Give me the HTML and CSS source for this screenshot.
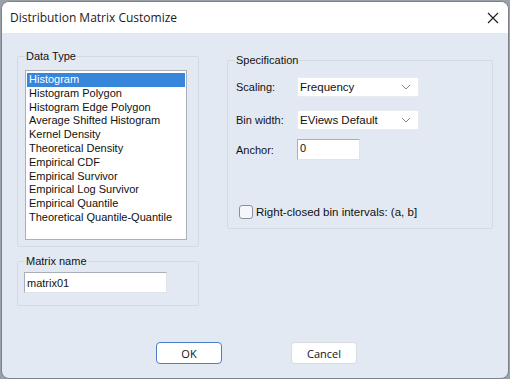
FILE: index.html
```html
<!DOCTYPE html>
<html lang="en">
  <head>
    <meta charset="UTF-8" />
    <title>Distribution Matrix Customize</title>
    <link rel="stylesheet" href="styles.css">
  </head>
  <body>
    <div class="window">
      <div class="titlebar">
        <span class="title">Distribution Matrix Customize</span>
        <svg class="close" width="12" height="12" viewBox="0 0 12 12">
          <path d="M1 1L11 11M11 1L1 11" stroke="#1a1a1a" stroke-width="1.1" fill="none" />
        </svg>
      </div>
      <div class="content">
        <div class="main">
          <div class="left-col">
            <fieldset class="group data-type">
              <legend>Data Type</legend>
              <ul class="listbox">
                <li class="selected">Histogram</li>
                <li>Histogram Polygon</li>
                <li>Histogram Edge Polygon</li>
                <li>Average Shifted Histogram</li>
                <li>Kernel Density</li>
                <li>Theoretical Density</li>
                <li>Empirical CDF</li>
                <li>Empirical Survivor</li>
                <li>Empirical Log Survivor</li>
                <li>Empirical Quantile</li>
                <li>Theoretical Quantile-Quantile</li>
              </ul>
            </fieldset>
            <fieldset class="group matrix-name">
              <legend>Matrix name</legend>
              <div class="textbox name-box">matrix01</div>
            </fieldset>
          </div>
          <fieldset class="group spec">
            <legend>Specification</legend>
            <div class="row">
              <span class="label">Scaling:</span>
              <div class="combo">
                <span>Frequency</span>
                <svg width="10" height="6" viewBox="0 0 10 6"><path d="M1 1L5 5L9 1" stroke="#8a8a8a" fill="none" /></svg>
              </div>
            </div>
            <div class="row">
              <span class="label">Bin width:</span>
              <div class="combo">
                <span>EViews Default</span>
                <svg width="10" height="6" viewBox="0 0 10 6"><path d="M1 1L5 5L9 1" stroke="#8a8a8a" fill="none" /></svg>
              </div>
            </div>
            <div class="row anchor-row">
              <span class="label">Anchor:</span>
              <div class="textbox anchor-box">0</div>
            </div>
            <label class="check-row">
              <span class="checkbox"></span>
              <span>Right-closed bin intervals: (a, b]</span>
            </label>
          </fieldset>
        </div>
        <div class="buttons">
          <button class="btn ok">OK</button>
          <button class="btn cancel">Cancel</button>
        </div>
      </div>
    </div>
  </body>
</html>
```

FILE: styles.css
```css
body {
  margin: 0;
  padding: 0;
  background-color: #9aa0a8;
  font-family: "Liberation Sans", Arial, sans-serif;
  font-size: 11px;
  color: #111;
}

.window {
  width: 506px;
  height: 376px;
  margin: 1px 0 0 1px;
  border: 1px solid #7d828a;
  border-radius: 8px;
  overflow: hidden;
  background-color: #e3e9f2;
}

.titlebar {
  height: 31px;
  background-color: #fff;
  display: flex;
  align-items: center;
  justify-content: space-between;
  padding: 0 9px 0 8px;
}

.title {
  font-family: "Open Sans", "Noto Sans", sans-serif;
  font-size: 12px;
  color: #1a1a1a;
}

.close {
  margin-top: 1px;
}

.content {
  padding: 17px 0 0 15px;
}

.main {
  display: flex;
  align-items: flex-start;
}

.left-col {
  width: 182px;
  display: flex;
  flex-direction: column;
  gap: 8px;
}

.group {
  margin: 0;
  border: 1px solid #d3dae4;
  border-radius: 2px;
}

.group legend {
  padding: 0 1px;
  margin-left: 0;
  color: #111;
}

.data-type {
  padding: 8px 11px 6px 7px;
}

.listbox {
  list-style: none;
  margin: 0;
  padding: 2px 1px;
  height: 164px;
  background-color: #fff;
  border: 1px solid #a9b0b9;
}

.listbox li {
  height: 13.8px;
  line-height: 13.5px;
  padding-left: 2px;
  white-space: nowrap;
}

.listbox .selected {
  background-color: #3686db;
  color: #fff;
}

.matrix-name {
  padding: 5px 10px 12px 6px;
}

.matrix-name legend {
  margin-left: 1px;
}

.textbox {
  background-color: #fff;
  border: 1px solid #e0e4ea;
  border-top-color: #a9afb7;
  border-left-color: #a9afb7;
  height: 19px;
  line-height: 17px;
  padding-left: 2px;
  box-sizing: border-box;
}

.name-box {
  width: 143px;
  height: 21px;
  line-height: 20px;
}

.spec {
  margin-left: 28px;
  margin-top: 4px;
  width: 266px;
  box-sizing: border-box;
  padding: 11px 0 9px 8px;
}

.spec legend {
  margin-left: -1px;
}

.row {
  display: flex;
  align-items: center;
  margin-bottom: 13px;
}

.row .label {
  width: 61px;
}

.anchor-row {
  margin-top: -4px;
}

.combo {
  width: 122px;
  height: 20px;
  box-sizing: border-box;
  background-color: #fff;
  border: 1px solid #e8ebf0;
  border-radius: 2px;
  display: flex;
  align-items: center;
  justify-content: space-between;
  padding: 0 7px 0 2px;
  font-size: 11.5px;
}

.anchor-box {
  width: 63px;
  height: 21px;
}

.check-row {
  display: flex;
  align-items: center;
  gap: 3px;
  margin-top: 45px;
  margin-left: 3px;
  font-size: 11.5px;
}

.checkbox {
  width: 12px;
  height: 12px;
  border: 1px solid #8b9098;
  border-radius: 3px;
  background-color: #f4f6f9;
}

.buttons {
  display: flex;
  gap: 69px;
  margin-top: 36px;
  padding-left: 139px;
}

.btn {
  width: 66px;
  height: 22px;
  background-color: #fff;
  border: 1px solid #d9dde3;
  border-radius: 4px;
  font-family: "Open Sans", "Noto Sans", sans-serif;
  font-size: 11px;
  color: #111;
  padding: 0;
}

.btn.ok {
  border: 1px solid #4a7ec9;
}
```
